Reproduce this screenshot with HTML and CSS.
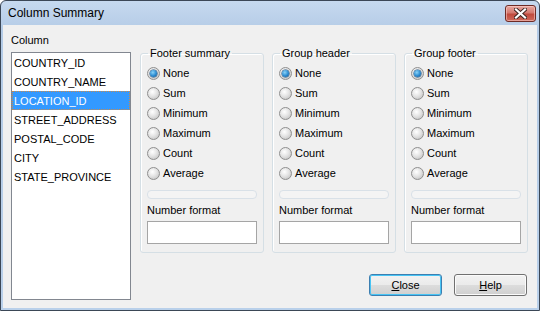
FILE: index.html
```html
<!DOCTYPE html>
<html lang="en">
<head>
  <meta charset="UTF-8" />
  <title>Column Summary</title>
  <link rel="stylesheet" href="styles.css">
</head>
<body>
  <div class="window">
    <div class="titlebar">
      <span class="title">Column Summary</span>
      <button class="close-x" aria-label="Close">
        <svg width="13" height="11" viewBox="0 0 13 11">
          <path d="M2 1.5 L11 9.5 M11 1.5 L2 9.5" stroke="#3a2320" stroke-width="4" stroke-linecap="square" fill="none"/>
          <path d="M2 1.5 L11 9.5 M11 1.5 L2 9.5" stroke="#ffffff" stroke-width="2.2" stroke-linecap="square" fill="none"/>
        </svg>
      </button>
    </div>

    <div class="client">
      <div class="left">
        <div class="label">Column</div>
        <ul class="listbox">
          <li>COUNTRY_ID</li>
          <li>COUNTRY_NAME</li>
          <li class="selected">LOCATION_ID</li>
          <li>STREET_ADDRESS</li>
          <li>POSTAL_CODE</li>
          <li>CITY</li>
          <li>STATE_PROVINCE</li>
        </ul>
      </div>

      <div class="right">
        <div class="groups">
          <fieldset class="group">
            <legend>Footer summary</legend>
            <label class="radio-row"><span class="radio checked"></span>None</label>
            <label class="radio-row"><span class="radio"></span>Sum</label>
            <label class="radio-row"><span class="radio"></span>Minimum</label>
            <label class="radio-row"><span class="radio"></span>Maximum</label>
            <label class="radio-row"><span class="radio"></span>Count</label>
            <label class="radio-row"><span class="radio"></span>Average</label>
            <div class="bar"></div>
            <div class="field-label">Number format</div>
            <div class="edit"></div>
          </fieldset>

          <fieldset class="group">
            <legend>Group header</legend>
            <label class="radio-row"><span class="radio checked"></span>None</label>
            <label class="radio-row"><span class="radio"></span>Sum</label>
            <label class="radio-row"><span class="radio"></span>Minimum</label>
            <label class="radio-row"><span class="radio"></span>Maximum</label>
            <label class="radio-row"><span class="radio"></span>Count</label>
            <label class="radio-row"><span class="radio"></span>Average</label>
            <div class="bar"></div>
            <div class="field-label">Number format</div>
            <div class="edit"></div>
          </fieldset>

          <fieldset class="group">
            <legend>Group footer</legend>
            <label class="radio-row"><span class="radio checked"></span>None</label>
            <label class="radio-row"><span class="radio"></span>Sum</label>
            <label class="radio-row"><span class="radio"></span>Minimum</label>
            <label class="radio-row"><span class="radio"></span>Maximum</label>
            <label class="radio-row"><span class="radio"></span>Count</label>
            <label class="radio-row"><span class="radio"></span>Average</label>
            <div class="bar"></div>
            <div class="field-label">Number format</div>
            <div class="edit"></div>
          </fieldset>
        </div>

        <div class="buttons">
          <button class="btn default"><u>C</u>lose</button>
          <button class="btn"><u>H</u>elp</button>
        </div>
      </div>
    </div>
  </div>
</body>
</html>
```

FILE: styles.css
```css
* {
  box-sizing: border-box;
}
body {
  margin: 0;
  font-family: 'Liberation Sans', Arial, sans-serif;
  font-size: 11px;
  color: #000;
  background: #ffffff;
}
.window {
  width: 540px;
  height: 311px;
  border: 1px solid #3b4756;
  border-radius: 6px 6px 0 0;
  background: linear-gradient(#c6d9ef, #b4cbe6 30px, #b9d0ea);
  padding: 0 2px 2px 2px;
  display: flex;
  flex-direction: column;
}
.titlebar {
  height: 24px;
  display: flex;
  align-items: center;
  justify-content: space-between;
  padding-left: 5px;
}
.title {
  font-size: 12px;
  color: #000;
}
.close-x {
  width: 31px;
  height: 17px;
  margin-top: 1px;
  margin-right: 1px;
  padding: 0;
  border: 1px solid #6e2b25;
  border-radius: 3px;
  background: linear-gradient(#e8a79f, #d47a70 45%, #c04a3d 55%, #cf6a5c);
  box-shadow: inset 0 0 0 1px rgba(255, 220, 215, 0.5);
  display: flex;
  align-items: center;
  justify-content: center;
}
.client {
  flex: 1;
  background: #f0f0f0;
  display: flex;
  gap: 9px;
  padding: 9px 9px 0 8px;
}
.left {
  width: 121px;
}
.label {
  height: 13px;
  line-height: 13px;
  margin-bottom: 5px;
}
.listbox {
  list-style: none;
  margin: 0;
  padding: 0;
  height: 248px;
  border: 1px solid #828790;
  background: #fff;
}
.listbox li {
  height: 19px;
  line-height: 19px;
  padding-left: 2px;
  border: 1px solid transparent;
  border-left: 0;
  border-right: 0;
}
.listbox li.selected {
  background: #3399ff;
  color: #fff;
  border: 1px dotted #c98a4c;
  padding-left: 1px;
}
.right {
  flex: 1;
  display: flex;
  flex-direction: column;
  padding-top: 13px;
}
.groups {
  display: flex;
  gap: 8px;
}
.group {
  width: 124px;
  height: 206px;
  margin: 0;
  padding: 3px 6px 0 6px;
  border: 1px solid #d5dfe5;
  border-radius: 3px;
  box-shadow: inset 1px 1px 0 #fff;
  display: flex;
  flex-direction: column;
}
.group legend {
  padding: 0 2px;
  margin-left: 1px;
  line-height: 13px;
}
.radio-row {
  display: flex;
  align-items: center;
  gap: 3px;
  height: 20px;
}
.radio {
  width: 13px;
  height: 13px;
  border-radius: 50%;
  border: 1px solid #8f8f8f;
  background: radial-gradient(circle at 40% 35%, #ffffff, #e4e4e4 45%, #c9c9c9 80%);
  position: relative;
}
.radio.checked::after {
  content: "";
  position: absolute;
  left: 2px;
  top: 2px;
  width: 7px;
  height: 7px;
  border-radius: 50%;
  background: radial-gradient(circle at 40% 35%, #8ad3f8, #2a8ad0 55%, #154f86);
  box-shadow: 0 0 0 0.5px #1b4b78;
}
.bar {
  height: 9px;
  margin-top: 7px;
  border: 1px solid #d9e1e8;
  border-radius: 4px;
  background: #f4f4f4;
}
.field-label {
  height: 13px;
  line-height: 13px;
  margin-top: 5px;
}
.edit {
  height: 23px;
  margin-top: 4px;
  border: 1px solid #a5a5a5;
  background: #fff;
}
.buttons {
  display: flex;
  justify-content: flex-end;
  gap: 12px;
  margin-top: 21px;
  padding-right: 1px;
}
.btn {
  width: 73px;
  height: 22px;
  padding: 0;
  font-family: 'Liberation Sans', Arial, sans-serif;
  font-size: 11px;
  color: #000;
  border: 1px solid #707070;
  border-radius: 3px;
  background: linear-gradient(#f2f2f2, #ebebeb 50%, #dddddd 50%, #cfcfcf);
  box-shadow: inset 0 0 0 1px #fbfbfb;
}
.btn.default {
  border-color: #3c7fb1;
  box-shadow: inset 0 0 0 1px #48c4f4;
}
```
